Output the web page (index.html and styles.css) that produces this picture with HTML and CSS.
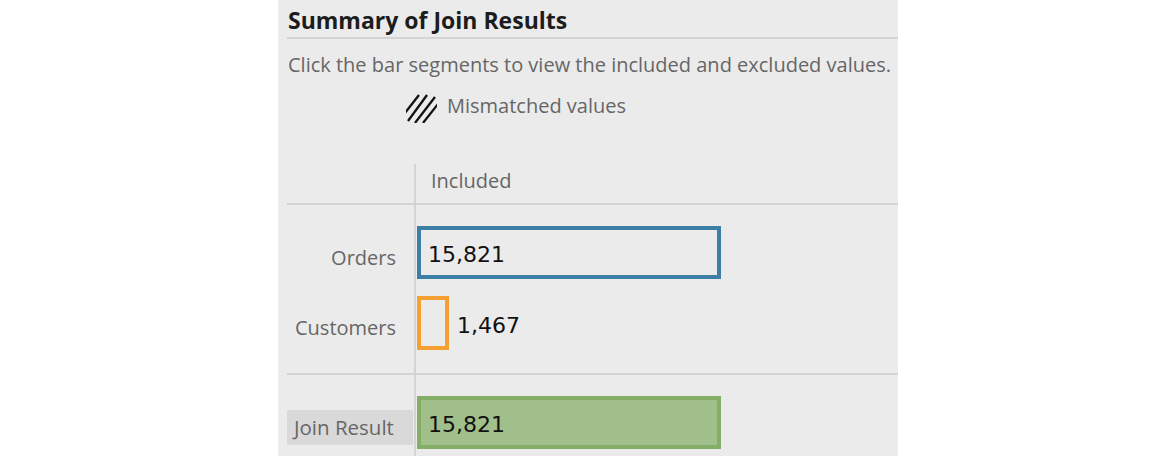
FILE: index.html
```html
<!DOCTYPE html>
<html lang="en">
<head>
<meta charset="utf-8">
<title>Summary of Join Results</title>
<link rel="stylesheet" href="styles.css">
</head>
<body>
<div class="panel">
  <div class="title">Summary of Join Results</div>
  <div class="desc">Click the bar segments to view the included and excluded values.</div>
  <div class="legend">
    <svg class="hatch" width="31" height="29" viewBox="0 0 31 29">
      <defs><clipPath id="hc"><rect x="0" y="0" width="31" height="29"/></clipPath></defs>
      <g clip-path="url(#hc)" stroke="#111" stroke-width="2.3" stroke-linecap="butt">
        <line x1="-1" y1="19" x2="13" y2="1"/>
        <line x1="2" y1="27" x2="21" y2="1"/>
        <line x1="9" y1="29" x2="29" y2="3"/>
        <line x1="17" y1="29" x2="32" y2="10"/>
      </g>
    </svg>
    <span class="legend-text">Mismatched values</span>
  </div>
  <div class="chart">
    <div class="row header">
      <div class="lab"></div>
      <div class="val"><span class="col-title">Included</span></div>
    </div>
    <div class="row section">
      <div class="lab">
        <div class="lab-item lab-orders">Orders</div>
        <div class="lab-item lab-customers">Customers</div>
      </div>
      <div class="val">
        <div class="bar-line first">
          <div class="bar bar-blue" style="width:304px"><span class="num">15,821</span></div>
        </div>
        <div class="bar-line second">
          <div class="bar bar-orange" style="width:32px"></div>
          <span class="num outside">1,467</span>
        </div>
      </div>
    </div>
    <div class="row section last">
      <div class="lab">
        <div class="lab-item lab-join"><span class="tag">Join Result</span></div>
      </div>
      <div class="val">
        <div class="bar-line third">
          <div class="bar bar-green" style="width:304px"><span class="num">15,821</span></div>
        </div>
      </div>
    </div>
  </div>
</div>
</body>
</html>
```
FILE: styles.css
```css
html, body {
  margin: 0;
  padding: 0;
  background: #ffffff;
}
body {
  font-family: "Open Sans", "Noto Sans", sans-serif;
  height: 456px;
  overflow: hidden;
}
.panel {
  margin-left: 278px;
  width: 611px;
  height: 456px;
  background: #ebebeb;
  padding-left: 9px;
  display: flex;
  flex-direction: column;
}
.title {
  height: 37px;
  line-height: 40px;
  font-size: 23px;
  font-weight: 700;
  color: #1c1c1c;
  padding-left: 1px;
  border-bottom: 2px solid #d4d4d4;
  box-sizing: content-box;
  white-space: nowrap;
}
.desc {
  margin-top: 11px;
  height: 30px;
  line-height: 30px;
  font-size: 20px;
  color: #666666;
  padding-left: 1px;
  white-space: nowrap;
}
.legend {
  margin-top: 11px;
  margin-left: 119px;
  display: flex;
  align-items: flex-start;
  gap: 10px;
  height: 30px;
}
.hatch {
  display: block;
  margin-top: 3px;
}
.legend-text {
  font-size: 20px;
  color: #666666;
  line-height: 30px;
}
.chart {
  margin-top: 43px;
  display: flex;
  flex-direction: column;
  flex: 1;
}
.row {
  display: flex;
}
.lab {
  width: 127px;
  flex: none;
  display: flex;
  flex-direction: column;
  align-items: flex-end;
}
.val {
  flex: 1;
  border-left: 2px solid #d4d4d4;
  display: flex;
  flex-direction: column;
}
.header {
  height: 39px;
  border-bottom: 2px solid #d4d4d4;
}
.col-title {
  font-size: 20px;
  color: #666666;
  padding-left: 15px;
  line-height: 34px;
}
.section {
  height: 168px;
  border-bottom: 2px solid #d4d4d4;
}
.section.last {
  flex: 1;
  border-bottom: none;
}
.lab-item {
  font-size: 20px;
  color: #666666;
  padding-right: 18px;
  line-height: 28px;
  white-space: nowrap;
}
.lab-orders {
  margin-top: 39px;
}
.lab-customers {
  margin-top: 42px;
}
.lab-join {
  margin-top: 35px;
  padding-right: 1px;
  align-self: stretch;
}
.tag {
  display: block;
  background: #d9d9d9;
  height: 35px;
  line-height: 35px;
  padding-left: 7px;
  font-size: 20.5px;
}
.bar-line {
  display: flex;
  align-items: center;
  margin-left: 1px;
}
.bar-line.first {
  margin-top: 21px;
}
.bar-line.second {
  margin-top: 17px;
}
.bar-line.third {
  margin-top: 21px;
}
.bar {
  box-sizing: border-box;
  border: 4px solid;
  display: flex;
  align-items: center;
}
.bar-blue {
  border-color: #3c7fa6;
  height: 53px;
}
.bar-orange {
  border-color: #f5a031;
  height: 54px;
}
.bar-green {
  border-color: #84ad66;
  background: #a1bf8a;
  height: 53px;
}
.num {
  font-family: "DejaVu Sans", "Open Sans", sans-serif;
  font-size: 22px;
  color: #111111;
  padding-left: 7px;
  padding-top: 4px;
}
.num.outside {
  padding-left: 8px;
}
```
